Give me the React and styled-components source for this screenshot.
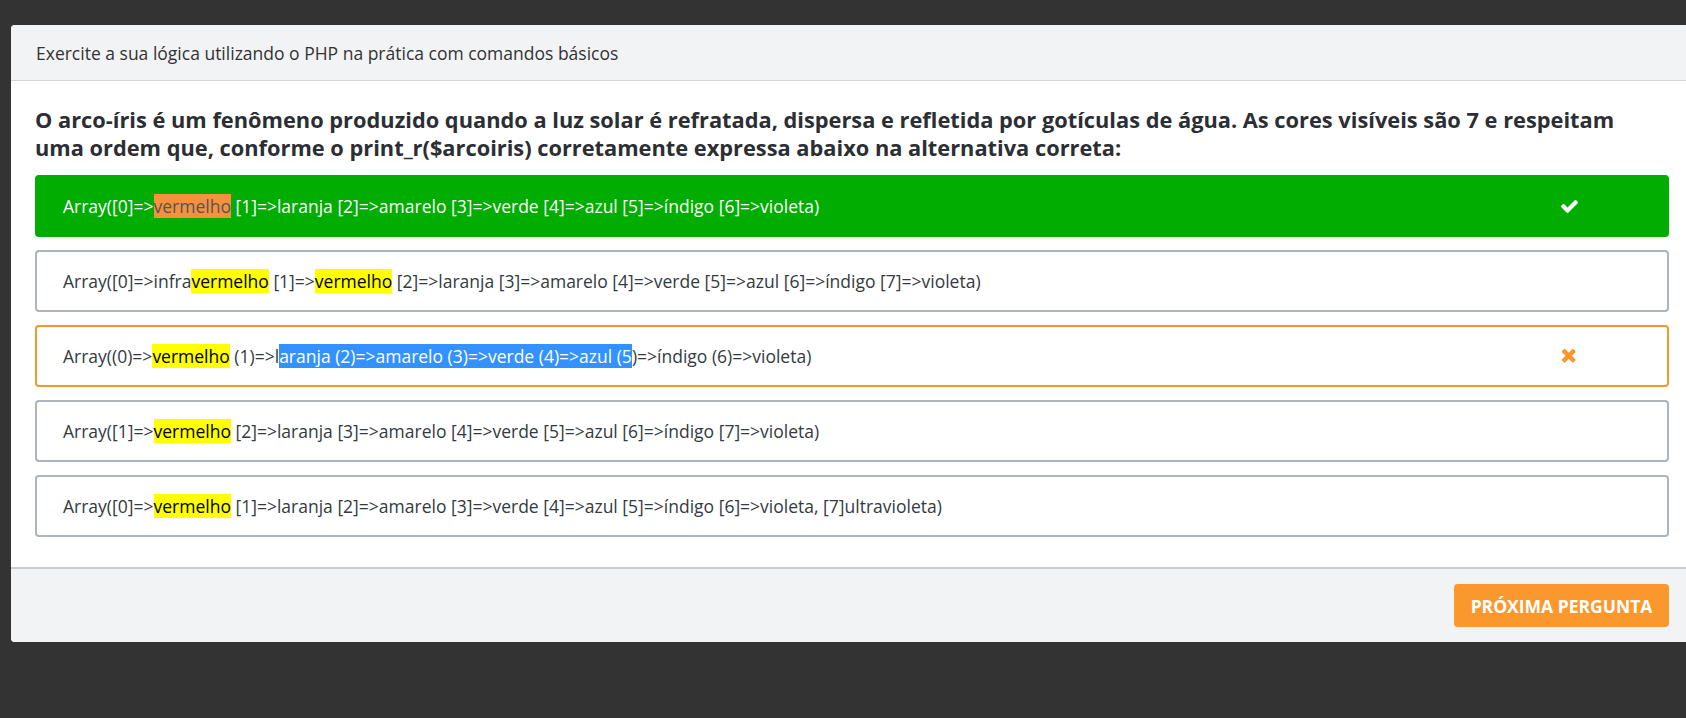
import React from 'react';
import styled, { createGlobalStyle } from 'styled-components';

const GlobalStyle = createGlobalStyle`
  html, body {
    margin: 0;
    padding: 0;
    background: #333333;
    font-family: "Open Sans", "Noto Sans", sans-serif;
    overflow: hidden;
  }
`;

const Page = styled.div`
  width: 1686px;
  height: 718px;
  padding: 25px 0 0 11px;
  box-sizing: border-box;
  overflow: hidden;
`;

const Modal = styled.div`
  width: 1682px;
  background: #fff;
  border-radius: 4px;
  overflow: hidden;
`;

const Header = styled.div`
  height: 55px;
  display: flex;
  align-items: center;
  padding: 0 25px;
  background: #f2f3f5;
  border-bottom: 1px solid #d3d6da;
  color: #333;
  font-size: 17.5px;
`;

const Body = styled.div`
  padding: 25px 24px 17px;
`;

const Question = styled.h2`
  margin: 0 40px 13px 0;
  font-size: 21.8px;
  font-weight: 700;
  line-height: 28px;
  color: #2b2f33;
`;

const tones = {
  correct: { bg: '#00ad00', border: '#00ad00', color: '#fff' },
  wrong: { bg: '#fff', border: '#f7962c', color: '#343a40' },
  idle: { bg: '#fff', border: '#adb4bc', color: '#343a40' },
};

const Option = styled.div`
  height: 62px;
  box-sizing: border-box;
  margin-bottom: 13px;
  display: flex;
  align-items: center;
  justify-content: space-between;
  padding: 0 24px 0 26px;
  border: 2px solid ${p => tones[p.$tone].border};
  background: ${p => tones[p.$tone].bg};
  color: ${p => tones[p.$tone].color};
  border-radius: 4px;
  font-size: 17.5px;
  line-height: 24px;
  white-space: nowrap;
`;

const Mark = styled.span`
  background: #ffff00;
  color: #000;
`;

const OrangeMark = styled.span`
  background: #f7913d;
  color: #555;
`;

const Selected = styled.span`
  background: #3392ff;
  color: #fff;
`;

const IconSlot = styled.span`
  display: flex;
  align-items: center;
  justify-content: center;
  width: 20px;
  margin-right: 64px;
`;

const Footer = styled.div`
  height: 73px;
  display: flex;
  align-items: center;
  justify-content: flex-end;
  padding: 0 24px;
  background: #f2f3f5;
  border-top: 2px solid #cacdd0;
`;

const NextButton = styled.button`
  height: 43px;
  width: 215px;
  padding: 0;
  border: none;
  border-radius: 4px;
  background: #fa982d;
  color: #fff;
  font-family: "Open Sans", sans-serif;
  font-weight: 700;
  font-size: 17.5px;
  text-transform: uppercase;
  cursor: pointer;
`;

const CheckIcon = () => (
  <svg width="17" height="13" viewBox="121 334 1550 1188" fill="#fff">
    <path d="M1671 566q0 40-28 68l-724 724-136 136q-28 28-68 28t-68-28l-136-136-362-362q-28-28-28-68t28-68l136-136q28-28 68-28t68 28l294 295 656-657q28-28 68-28t68 28l136 136q28 28 28 68z" />
  </svg>
);

const TimesIcon = () => (
  <svg width="13.5" height="13.5" viewBox="110 366 1188 1188" fill="#f7962c">
    <path d="M1298 1322q0 40-28 68l-136 136q-28 28-68 28t-68-28l-294-294-294 294q-28 28-68 28t-68-28l-136-136q-28-28-28-68t28-68l294-294-294-294q-28-28-28-68t28-68l136-136q28-28 68-28t68 28l294 294 294-294q28-28 68-28t68 28l136 136q28 28 28 68t-28 68l-294 294 294 294q28 28 28 68z" />
  </svg>
);

const App = () => (
  <Page>
    <GlobalStyle />
    <Modal>
      <Header>Exercite a sua lógica utilizando o PHP na prática com comandos básicos</Header>
      <Body>
        <Question>
          O arco-íris é um fenômeno produzido quando a luz solar é refratada, dispersa e refletida por gotículas de água. As cores visíveis são 7 e respeitam uma ordem que, conforme o print_r($arcoiris) corretamente expressa abaixo na alternativa correta:
        </Question>

        <Option $tone="correct">
          <span>
            Array([0]=&gt;<OrangeMark>vermelho</OrangeMark> [1]=&gt;laranja [2]=&gt;amarelo [3]=&gt;verde [4]=&gt;azul [5]=&gt;índigo [6]=&gt;violeta)
          </span>
          <IconSlot><CheckIcon /></IconSlot>
        </Option>

        <Option $tone="idle">
          <span>
            Array([0]=&gt;infra<Mark>vermelho</Mark> [1]=&gt;<Mark>vermelho</Mark> [2]=&gt;laranja [3]=&gt;amarelo [4]=&gt;verde [5]=&gt;azul [6]=&gt;índigo [7]=&gt;violeta)
          </span>
        </Option>

        <Option $tone="wrong">
          <span>
            Array((0)=&gt;<Mark>vermelho</Mark> (1)=&gt;l<Selected>aranja (2)=&gt;amarelo (3)=&gt;verde (4)=&gt;azul (5</Selected>)=&gt;índigo (6)=&gt;violeta)
          </span>
          <IconSlot><TimesIcon /></IconSlot>
        </Option>

        <Option $tone="idle">
          <span>
            Array([1]=&gt;<Mark>vermelho</Mark> [2]=&gt;laranja [3]=&gt;amarelo [4]=&gt;verde [5]=&gt;azul [6]=&gt;índigo [7]=&gt;violeta)
          </span>
        </Option>

        <Option $tone="idle">
          <span>
            Array([0]=&gt;<Mark>vermelho</Mark> [1]=&gt;laranja [2]=&gt;amarelo [3]=&gt;verde [4]=&gt;azul [5]=&gt;índigo [6]=&gt;violeta, [7]ultravioleta)
          </span>
        </Option>
      </Body>
      <Footer>
        <NextButton>Próxima pergunta</NextButton>
      </Footer>
    </Modal>
  </Page>
);

export default App;
